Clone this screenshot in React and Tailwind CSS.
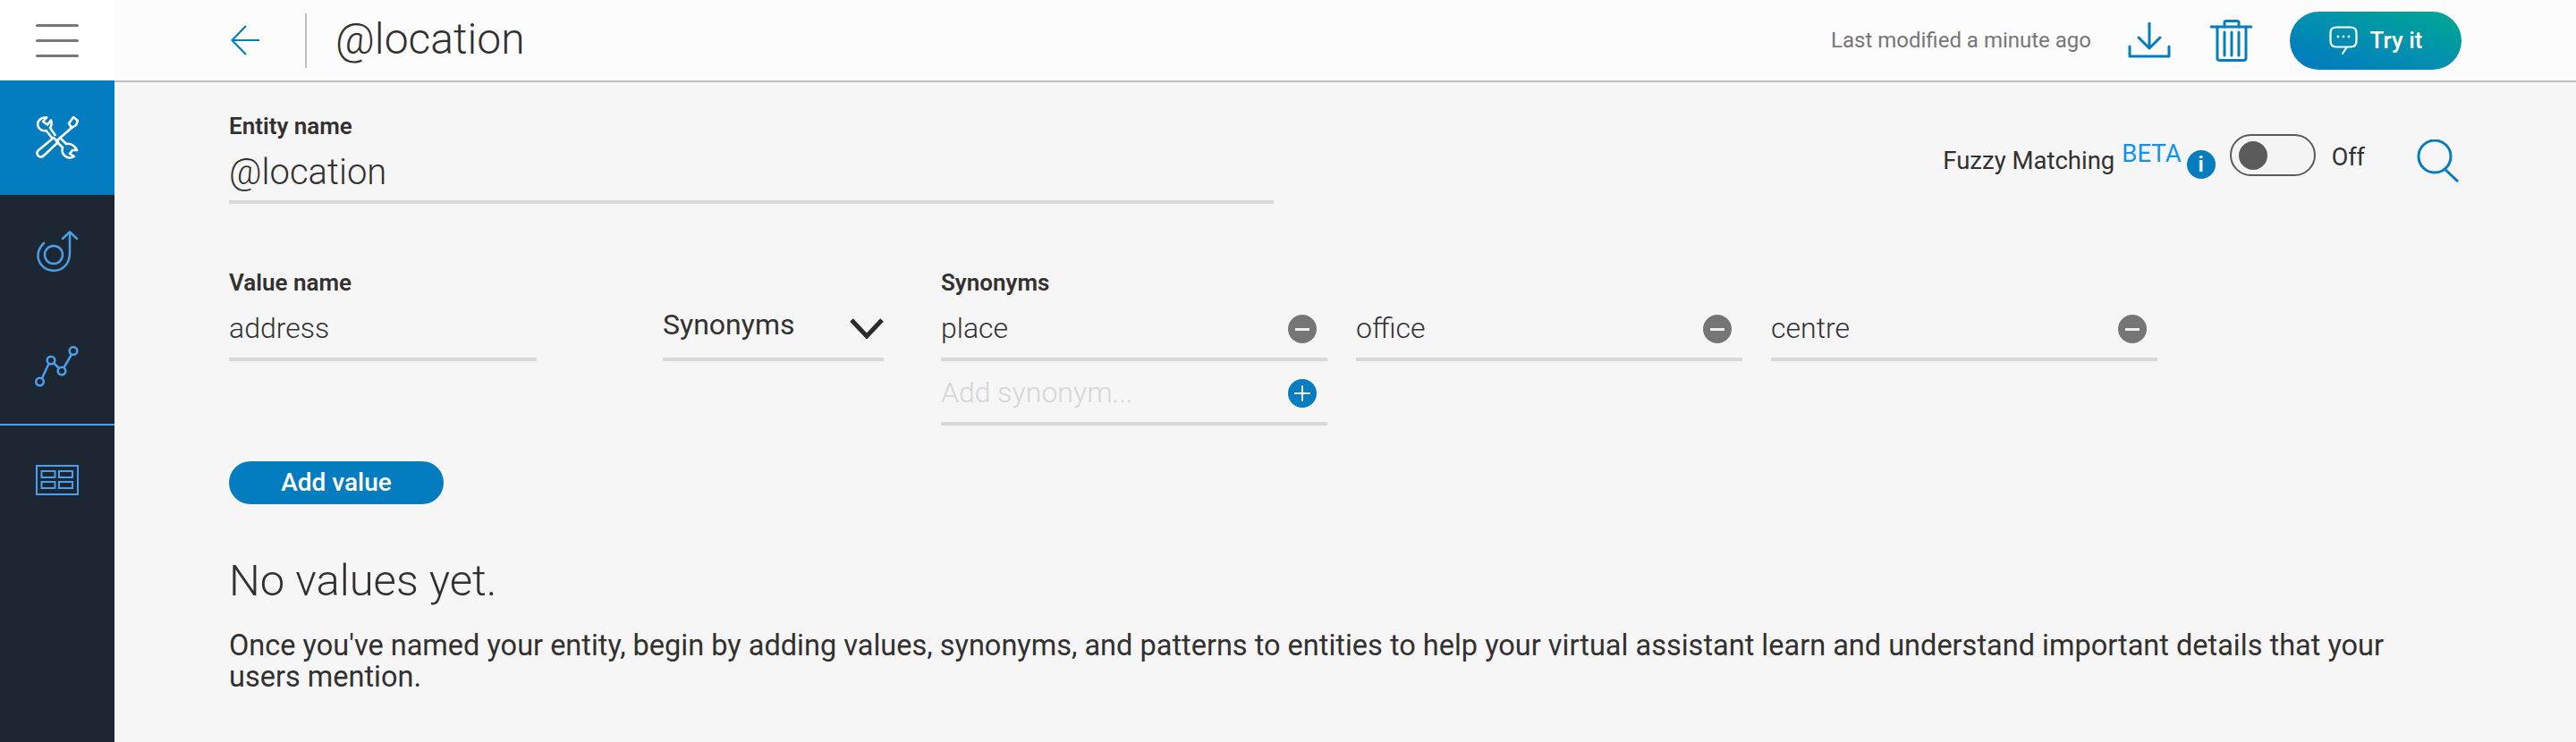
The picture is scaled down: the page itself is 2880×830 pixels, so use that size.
import React from 'react';

const Wrench = () => (
  <svg width="48" height="48" viewBox="0 0 48 48" fill="none" stroke="#fff" strokeWidth="2.600" strokeLinejoin="round" strokeLinecap="round">
    <path d="M12 1.500 C5 1 1 6 2.500 11 C3.500 15 8 17 11.500 16 L18 24" />
    <path d="M21.500 21 L16 13 C18 10 18 7 17 4.500 L13 9.500 L8 6 L12 1.500" />
    <path d="M27 24 L34 31 C39 30 44 33 46 38 L41 38 L38 42 L43 45 C38 48 32 46 30 41 C29.500 39 29.500 37 30 35 L24 29" />
    <path d="M42 1 L47 5 L45 10 L40 13 L23 28" />
    <path d="M40 13 L37 8 L42 1" />
    <path d="M20 24 L25 29 L9 44 C7 46 4 46 2.500 44 C1 42 1 40 3 38 Z" />
  </svg>
);

const Flow = () => (
  <svg width="48" height="48" viewBox="0 0 48 48" fill="none" stroke="#4a9fe8" strokeWidth="2.500" strokeLinecap="round" strokeLinejoin="round">
    <path d="M9 14 C2 21 0 30 6 38 C13 47 27 47 34 38 C37 34 38 30 38 25 L38 2" />
    <path d="M30 9 L38 1.500 L46 9" />
    <circle cx="20" cy="27" r="10" />
  </svg>
);

const Chart = () => (
  <svg width="50" height="46" viewBox="0 0 50 46" fill="none" stroke="#4a9fe8" strokeWidth="2.500">
    <circle cx="5.500" cy="40" r="4.300" />
    <circle cx="18" cy="16" r="4.300" />
    <circle cx="30" cy="28" r="4.300" />
    <circle cx="43" cy="5.500" r="4.300" />
    <path d="M8 36 L15.500 20 M21 19 L27 25 M32.500 24 L41 9.500" />
  </svg>
);

const Board = () => (
  <svg width="48" height="34" viewBox="0 0 48 34" fill="none" stroke="#4a9fe8" strokeWidth="2">
    <rect x="1" y="1" width="46" height="32" strokeWidth="2" />
    <rect x="6.500" y="7" width="15" height="7" />
    <rect x="26" y="7" width="15" height="7" />
    <rect x="6.500" y="19" width="15" height="7" />
    <rect x="26" y="19" width="15" height="7" />
  </svg>
);

const Minus = () => (
  <span className="w-[32px] h-[32px] flex-none flex items-center justify-center rounded-full bg-[#777677] mr-[12px] mt-[4px]">
    <span className="w-[16px] h-[3px] bg-[#f0f0f0]" />
  </span>
);

const Plus = () => (
  <span className="relative h-[32px] w-[32px] flex-none flex items-center justify-center rounded-full bg-[#047cc0] mr-[12px] mt-[4px]">
    <span className="w-[18px] h-[2px] bg-white" />
    <span className="absolute w-[2px] h-[18px] bg-white" />
  </span>
);

const Field = ({ value, placeholder, children, className = '' }) => (
  <div className={`h-[72px] flex items-center justify-between border-b-4 border-[#d8d8d8] ${className}`}>
    <span className={`text-[32px] leading-none font-light mt-[2px] ${placeholder ? 'text-[#d5d5d5]' : 'text-[#333030]'}`}>{value}</span>
    {children}
  </div>
);

const SideItem = ({ children, active, className = '' }) => (
  <div className={`w-full flex items-center justify-center ${active ? 'bg-[#047cc0]' : ''} ${className}`}>{children}</div>
);

export default function App() {
  return (
    <div className="w-[2880px] h-[830px] overflow-hidden flex bg-[#f6f6f6] text-[#333030] font-['Roboto',sans-serif]">
      <nav className="w-[128px] flex-none bg-[#1c2733] flex flex-col">
        <div className="h-[90px] bg-white flex flex-col gap-[14px] items-center justify-center">
          <span className="w-[48px] h-[3px] bg-[#777] rounded-full" />
          <span className="w-[48px] h-[3px] bg-[#777] rounded-full" />
          <span className="w-[48px] h-[3px] bg-[#777] rounded-full" />
        </div>
        <SideItem active className="h-[128px]"><Wrench /></SideItem>
        <SideItem className="h-[128px]"><Flow /></SideItem>
        <SideItem className="h-[130px] border-b-2 border-[#4a9fe8]"><Chart /></SideItem>
        <SideItem className="h-[122px]"><Board /></SideItem>
      </nav>

      <div className="flex-1 flex flex-col min-w-0">
        <header className="h-[92px] flex-none flex items-center bg-[#fcfcfc] border-b-2 border-[#bebebe] pl-[130px] pr-[128px]">
          <svg width="32" height="34" viewBox="0 0 32 34" fill="none" stroke="#047cc0" strokeWidth="2.200" className="flex-none">
            <path d="M17 1 L1.500 17 L17 33 M1.500 17 L32 17" />
          </svg>
          <span className="w-[2px] h-[61px] bg-[#bebebe] ml-[51px]" />
          <h1 className="ml-[32px] mb-[3px] text-[48px] leading-none font-light text-[#333030]">@location</h1>
          <span className="ml-auto text-[24px] text-[#777677]">Last modified a minute ago</span>
          <svg width="48" height="40" viewBox="0 0 48 40" fill="none" stroke="#047cc0" strokeWidth="3" strokeLinecap="round" strokeLinejoin="round" className="ml-[41px] flex-none">
            <path d="M24 1 L24 29 M12 17 L24 29 L36 17" />
            <path d="M2 27 L2 38 L46 38 L46 27" />
          </svg>
          <svg width="47" height="47" viewBox="0 0 47 47" fill="none" stroke="#047cc0" strokeWidth="3" strokeLinecap="round" strokeLinejoin="round" className="ml-[44px] flex-none">
            <path d="M1 8 L46 8" />
            <path d="M16 8 L16 3 Q16 1.500 18 1.500 L30 1.500 Q32 1.500 32 3 L32 8" />
            <path d="M8 8 L8 43 Q8 45.500 11 45.500 L37 45.500 Q40 45.500 40 43 L40 8" />
            <path d="M16 14 L16 40 M24 14 L24 40 M32 14 L32 40" />
          </svg>
          <button className="ml-[42px] w-[192px] h-[65px] flex-none rounded-full flex items-center justify-center gap-[14px] bg-gradient-to-tr from-[#0477bf] via-[#0490b0] to-[#03a78f] text-white text-[26px] font-medium">
            <svg width="32" height="32" viewBox="0 0 32 32" fill="none" stroke="#fff" strokeWidth="2.200" strokeLinejoin="round" strokeLinecap="round">
              <path d="M20 23.500 L24 23.500 C28 23.500 30.500 21 30.500 17 L30.500 8 C30.500 4 28 1.500 24 1.500 L8 1.500 C4 1.500 1.500 4 1.500 8 L1.500 17 C1.500 21 4 23.500 8 23.500 L20 23.500 L15 31" />
              <circle cx="10" cy="12" r="1.400" fill="#fff" stroke="none" />
              <circle cx="16" cy="12" r="1.400" fill="#fff" stroke="none" />
              <circle cx="22" cy="12" r="1.400" fill="#fff" stroke="none" />
            </svg>
            Try it
          </button>
        </header>

        <main className="flex-1 pl-[128px] pr-[128px] pt-[33px]">
          <div className="flex justify-between">
            <div className="w-[1168px]">
              <label className="block text-[26px] leading-[32px] font-semibold">Entity name</label>
              <div className="h-[71px] pt-[5px] flex items-center border-b-4 border-[#d8d8d8] text-[40px] font-light">@location</div>
            </div>
            <div className="flex items-start pt-[25px] pr-[2px]">
              <span className="text-[27.5px] leading-[32px] mt-[14px]">Fuzzy Matching</span>
              <span className="text-[27.5px] leading-[20px] text-[#0f93ee] ml-[8px] mt-[12px]">BETA</span>
              <span className="ml-[6px] mt-[18px] w-[32px] h-[32px] rounded-full bg-[#047cc0] text-white text-[24px] font-semibold leading-[32px] text-center">i</span>
              <span className="ml-[16px] w-[96px] h-[47px] rounded-full border-2 border-[#5a5a5a] bg-[#f4f4f4] flex items-center pl-[8px] flex-none">
                <span className="w-[32px] h-[32px] rounded-full bg-[#5a5a5a]" />
              </span>
              <span className="ml-[18px] text-[27px] leading-[32px] mt-[10px]">Off</span>
              <svg width="48" height="48" viewBox="0 0 48 48" fill="none" stroke="#047cc0" strokeWidth="3" className="ml-[58px] mt-[6px] flex-none">
                <circle cx="20" cy="19" r="18" />
                <path d="M31 33 L46 47" />
              </svg>
            </div>
          </div>

          <div className="flex mt-[72px]">
            <div className="w-[344px] flex-none">
              <label className="block text-[26px] leading-[32px] font-semibold">Value name</label>
              <Field value="address" />
            </div>
            <div className="w-[247px] ml-[141px] flex-none pt-[32px]">
              <div className="h-[72px] flex items-center justify-between border-b-4 border-[#d8d8d8]">
                <span className="text-[32px] leading-none mb-[6px]">Synonyms</span>
                <svg width="38" height="24" viewBox="0 0 38 24" fill="none" stroke="#2b2b2b" strokeWidth="5" className="mt-[2px]">
                  <path d="M2 3 L19 21 L36 3" />
                </svg>
              </div>
            </div>
            <div className="ml-[64px] flex-none">
              <label className="block text-[26px] leading-[32px] font-semibold">Synonyms</label>
              <div className="flex items-start gap-[32px]">
                <div className="w-[432px]">
                  <Field value="place"><Minus /></Field>
                  <Field value="Add synonym..." placeholder><Plus /></Field>
                </div>
                <Field value="office" className="w-[432px]"><Minus /></Field>
                <Field value="centre" className="w-[432px]"><Minus /></Field>
              </div>
            </div>
          </div>

          <button className="block mt-[40px] w-[240px] h-[48px] rounded-full bg-[#047cc0] text-white text-[28px] font-medium leading-none">Add value</button>

          <h2 className="mt-[58px] text-[49px] leading-[56px] font-light text-[#333030]">No values yet.</h2>
          <p className="mt-[27px] w-[2450px] text-[32.5px] leading-[35px]">
            Once you've named your entity, begin by adding values, synonyms, and patterns to entities to help your virtual assistant learn and understand important details that your users mention.
          </p>
        </main>
      </div>
    </div>
  );
}
